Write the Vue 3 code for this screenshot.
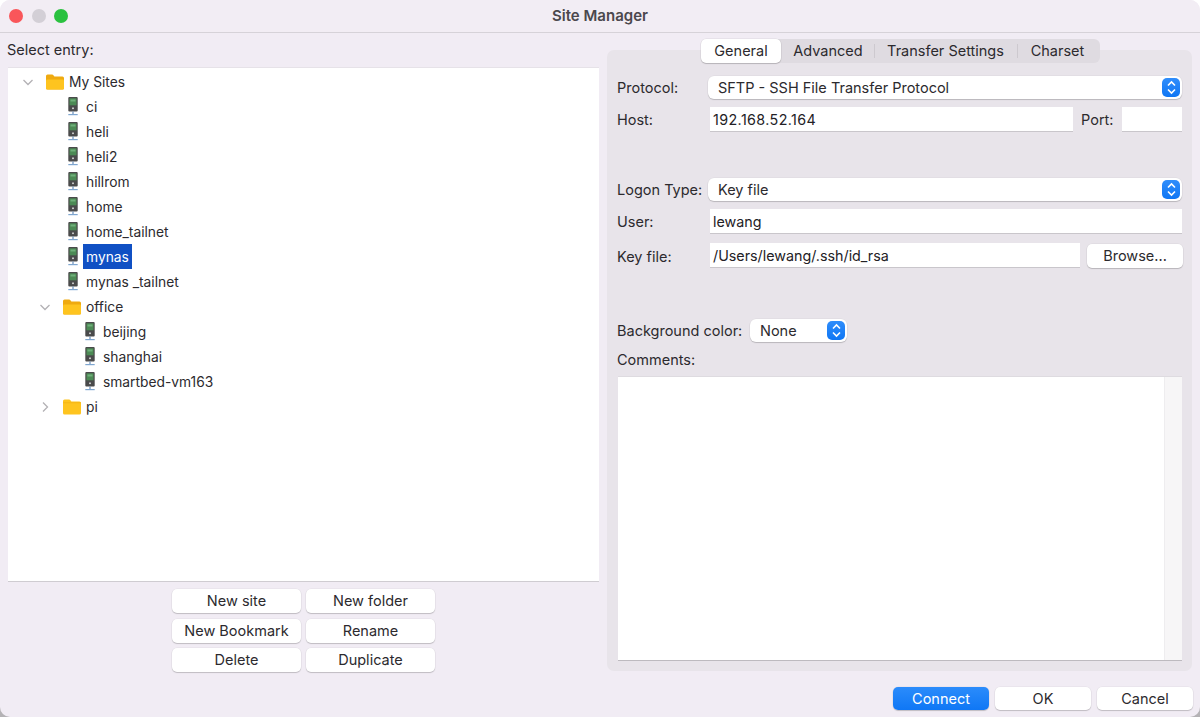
<script setup>
const rows = [
  { name: 'My Sites', depth: 0, type: 'open' },
  { name: 'ci', depth: 1, type: 'site' },
  { name: 'heli', depth: 1, type: 'site' },
  { name: 'heli2', depth: 1, type: 'site' },
  { name: 'hillrom', depth: 1, type: 'site' },
  { name: 'home', depth: 1, type: 'site' },
  { name: 'home_tailnet', depth: 1, type: 'site' },
  { name: 'mynas', depth: 1, type: 'site', selected: true },
  { name: 'mynas _tailnet', depth: 1, type: 'site' },
  { name: 'office', depth: 1, type: 'open' },
  { name: 'beijing', depth: 2, type: 'site' },
  { name: 'shanghai', depth: 2, type: 'site' },
  { name: 'smartbed-vm163', depth: 2, type: 'site' },
  { name: 'pi', depth: 1, type: 'closed' }
]
const actions = ['New site', 'New folder', 'New Bookmark', 'Rename', 'Delete', 'Duplicate']
const tabs = ['General', 'Advanced', 'Transfer Settings', 'Charset']
</script>

<template>
  <div class="window">
    <header class="titlebar">
      <div class="lights">
        <span class="light red"></span>
        <span class="light grey"></span>
        <span class="light green"></span>
      </div>
      <div class="title">Site Manager</div>
    </header>

    <main class="content">
      <section class="left">
        <div class="select-label">Select entry:</div>
        <div class="tree">
          <div
            v-for="row in rows"
            :key="row.name"
            class="row"
            :style="{ paddingLeft: 10 + row.depth * 17 + 'px' }"
          >
            <span class="twisty">
              <svg v-if="row.type === 'open'" width="12" height="12" viewBox="0 0 12 12">
                <path d="M1.5 4 L6 8.5 L10.5 4" fill="none" stroke="#b3b1b5" stroke-width="1.3" />
              </svg>
              <svg v-else-if="row.type === 'closed'" width="12" height="12" viewBox="0 0 12 12">
                <path d="M4 1.5 L8.5 6 L4 10.5" fill="none" stroke="#b3b1b5" stroke-width="1.3" />
              </svg>
            </span>
            <span class="icon" :class="{ centered: row.type === 'site' }">
              <svg v-if="row.type === 'site'" width="12" height="19" viewBox="0 0 12 19">
                <rect x="1.3" y="0" width="9.4" height="14.5" rx="1" fill="#4a4a4b" />
                <rect x="2.5" y="1.3" width="7" height="7" fill="#4c8a55" />
                <rect x="3.5" y="2.5" width="5" height="2" fill="#6fb07a" />
                <rect x="5.2" y="10.5" width="1.6" height="1.6" fill="#e4e4e4" />
                <rect x="5.4" y="14.5" width="1.2" height="2.6" fill="#6a8fba" />
                <rect x="1.3" y="17" width="9.4" height="1.2" fill="#7fa6d0" />
              </svg>
              <svg v-else-if="row.type === 'open'" width="18" height="16" viewBox="0 0 18 16">
                <path d="M0 2 Q0 0.5 1.5 0.5 H6 Q7 0.5 7.6 1.4 L8.4 2.5 H16.5 Q18 2.5 18 4 V14 Q18 15.5 16.5 15.5 H1.5 Q0 15.5 0 14 Z" fill="#efaa10" />
                <path d="M0 7 Q0 5.6 1.5 5.6 H16.5 Q18 5.6 18 7 V14 Q18 15.5 16.5 15.5 H1.5 Q0 15.5 0 14 Z" fill="#fec41f" />
              </svg>
              <svg v-else width="18" height="16" viewBox="0 0 18 16">
                <path d="M0 2 Q0 0.5 1.5 0.5 H6 Q7 0.5 7.6 1.4 L8.4 2.5 H16.5 Q18 2.5 18 4 V14 Q18 15.5 16.5 15.5 H1.5 Q0 15.5 0 14 Z" fill="#fec41f" />
                <path d="M0 3.4 H18 V4.2 H0 Z" fill="#f2b215" />
              </svg>
            </span>
            <span class="name" :class="{ selected: row.selected }">{{ row.name }}</span>
          </div>
        </div>
        <div class="actions">
          <button v-for="a in actions" :key="a" class="btn">{{ a }}</button>
        </div>
      </section>

      <section class="right">
        <div class="panel">
          <div class="field protocol">
            <label class="lbl">Protocol:</label>
            <div class="select wide">
              <span>SFTP - SSH File Transfer Protocol</span>
              <span class="stepper">
                <svg width="11" height="15" viewBox="0 0 11 15">
                  <path d="M2 5.5 L5.5 2 L9 5.5 M2 9.5 L5.5 13 L9 9.5" fill="none" stroke="#fff" stroke-width="1.6" />
                </svg>
              </span>
            </div>
          </div>
          <div class="field host">
            <label class="lbl">Host:</label>
            <div class="input host-input">192.168.52.164</div>
            <label class="port-lbl">Port:</label>
            <div class="input port-input"></div>
          </div>
          <div class="field logon">
            <label class="lbl">Logon Type:</label>
            <div class="select wide">
              <span>Key file</span>
              <span class="stepper">
                <svg width="11" height="15" viewBox="0 0 11 15">
                  <path d="M2 5.5 L5.5 2 L9 5.5 M2 9.5 L5.5 13 L9 9.5" fill="none" stroke="#fff" stroke-width="1.6" />
                </svg>
              </span>
            </div>
          </div>
          <div class="field user">
            <label class="lbl">User:</label>
            <div class="input grow">lewang</div>
          </div>
          <div class="field keyfile">
            <label class="lbl">Key file:</label>
            <div class="input key-input">/Users/lewang/.ssh/id_rsa</div>
            <button class="btn browse">Browse...</button>
          </div>
          <div class="field bg">
            <label class="bg-lbl">Background color:</label>
            <div class="select small">
              <span>None</span>
              <span class="stepper">
                <svg width="11" height="15" viewBox="0 0 11 15">
                  <path d="M2 5.5 L5.5 2 L9 5.5 M2 9.5 L5.5 13 L9 9.5" fill="none" stroke="#fff" stroke-width="1.6" />
                </svg>
              </span>
            </div>
          </div>
          <div class="comments-lbl">Comments:</div>
          <div class="comments">
            <div class="comments-text"></div>
            <div class="scrolltrack"></div>
          </div>
        </div>
        <div class="tabs">
          <div v-for="(t, i) in tabs" :key="t" class="tab" :class="{ active: i === 0 }">{{ t }}</div>
        </div>
      </section>
    </main>

    <footer class="footer">
      <button class="btn foot primary">Connect</button>
      <button class="btn foot">OK</button>
      <button class="btn foot">Cancel</button>
    </footer>
  </div>
</template>

<style>
html, body { margin: 0; background: linear-gradient(#fff 50%, #b4b2b5 50%); }
</style>

<style scoped>
* { box-sizing: border-box; }
.window {
  width: 1200px;
  height: 717px;
  background: #f1ecf4;
  border-radius: 10px;
  overflow: hidden;
  display: flex;
  flex-direction: column;
  font-family: Inter, "Liberation Sans", sans-serif;
  font-size: 14.5px;
  color: #2c2a2e;
}
.titlebar {
  height: 33px;
  flex: none;
  position: relative;
  background: #f2edf4;
  border-bottom: 1px solid #d6d2d8;
  display: flex;
  align-items: center;
  justify-content: center;
  padding-bottom: 2px;
}
.lights {
  position: absolute;
  left: 9px;
  top: 9px;
  display: flex;
  gap: 8.5px;
}
.light { width: 14px; height: 14px; border-radius: 50%; }
.red { background: #f9565a; }
.grey { background: #d3cfd6; }
.green { background: #2ac13f; }
.title { font-weight: 600; font-size: 15px; color: #4b484d; }

.content {
  height: 638px;
  flex: none;
  display: flex;
  padding: 0 7px 0 8px;
  gap: 8px;
}
.left { width: 591px; flex: none; display: flex; flex-direction: column; }
.select-label { height: 34px; flex: none; padding-top: 8px; margin-left: -1px; line-height: 18px; }
.tree {
  height: 515px;
  flex: none;
  background: #fff;
  border-bottom: 1px solid #cfccd1;
  border-top: 1px solid #e6e2e8;
  padding-top: 1px;
  font-size: 13.8px;
}
.row { height: 25px; display: flex; align-items: center; }
.twisty {
  width: 28px;
  flex: none;
  display: flex;
  align-items: center;
  padding-left: 4px;
}
.icon { width: 20px; flex: none; display: flex; align-items: center; }
.icon.centered { justify-content: center; }
.name { height: 25px; line-height: 26px; padding: 0 3px; }
.name.selected { background: #1050c4; color: #fff; }

.actions {
  display: grid;
  flex: none;
  grid-template-columns: 129px 129px;
  column-gap: 5px;
  row-gap: 5.5px;
  justify-content: center;
  margin-top: 7px;
  margin-left: -16px;
  width: 623px;
}
.btn {
  font: inherit;
  color: #2c2a2e;
  height: 24px;
  padding: 0 0 1px;
  border: none;
  background: #fff;
  border-radius: 5px;
  box-shadow: 0 0 0 0.5px rgba(0,0,0,.06), 0 1px 1px rgba(0,0,0,.18);
}

.right { width: 585px; flex: none; position: relative; padding-top: 17px; }
.panel {
  height: 621px;
  background: #e8e4ea;
  border-radius: 7px;
  padding: 0 10px;
  display: flex;
  flex-direction: column;
}
.tabs {
  position: absolute;
  top: 6px;
  left: 94px;
  width: 399px;
  height: 24px;
  background: #dfdbe1;
  border-radius: 6px;
  display: flex;
  align-items: center;
}
.tab {
  height: 24px;
  line-height: 24px;
  text-align: center;
  flex: none;
  position: relative;
}
.tab:nth-child(1) { width: 80px; }
.tab:nth-child(2) { width: 93px; padding-left: 1px; }
.tab:nth-child(3) { width: 143px; }
.tab:nth-child(4) { width: 83px; padding-right: 2px; }
.tab:nth-child(3)::before, .tab:nth-child(4)::before {
  content: "";
  position: absolute;
  left: 0;
  top: 5px;
  height: 14px;
  width: 1px;
  background: #cdc9cf;
}
.tab.active {
  background: #fff;
  border-radius: 5px;
  box-shadow: 0 0 0 0.5px rgba(0,0,0,.08), 0 1px 1px rgba(0,0,0,.18);
}

.field { display: flex; align-items: center; flex: none; }
.lbl { width: 91px; flex: none; }
.protocol { height: 23px; margin-top: 26px; }
.host { height: 25px; margin-top: 8px; }
.logon { height: 23px; margin-top: 46px; }
.user { height: 25px; margin-top: 8px; }
.keyfile { height: 25px; margin-top: 9px; }
.keyfile .lbl { padding-top: 1px; }
.bg { height: 23px; margin-top: 51px; }
.bg-lbl { width: 133px; flex: none; }
.comments-lbl { margin-top: 9px; height: 18px; line-height: 18px; flex: none; }
.select {
  height: 23px;
  background: #fff;
  border-radius: 6px;
  box-shadow: 0 0 0 0.5px rgba(0,0,0,.05), 0 1px 1px rgba(0,0,0,.18);
  display: flex;
  align-items: center;
  justify-content: space-between;
  padding: 0 2px 0 10px;
}
.wide { width: 475px; }
.small { width: 97px; }
.stepper {
  width: 18px;
  height: 19px;
  border-radius: 5px;
  background: linear-gradient(#2f8dfb, #0f76f4);
  display: flex;
  align-items: center;
  justify-content: center;
}
.input {
  height: 25px;
  line-height: 25px;
  background: #fff;
  border-bottom: 1px solid #c9c6cb;
  padding-left: 3px;
  margin-left: 2px;
  color: #232125;
  font-size: 14.3px;
}
.host-input { width: 363px; letter-spacing: 0.4px; }
.port-lbl { width: 49px; flex: none; padding-left: 8px; }
.port-input { width: 60px; margin-left: 0; }
.grow { flex: 1; }
.key-input { width: 370px; flex: none; }
.browse { width: 96px; margin-left: 7px; flex: none; }
.comments {
  margin-top: 7px;
  height: 285px;
  flex: none;
  width: 564px;
  margin-left: 1px;
  background: #fff;
  border-bottom: 1px solid #bdbabf;
  border-top: 1px solid #dedbe0;
  display: flex;
}
.comments-text { flex: 1; }
.scrolltrack { width: 18px; background: #f7f6f7; border-left: 1px solid #eeedef; }

.footer {
  height: 46px;
  flex: none;
  display: flex;
  justify-content: flex-end;
  gap: 6px;
  padding: 16px 7px 0 0;
  align-items: flex-start;
}
.foot { width: 96px; height: 23px; padding: 0; }
.primary { background: linear-gradient(#2b8cfb, #0f77f5); color: #fff; }
</style>
